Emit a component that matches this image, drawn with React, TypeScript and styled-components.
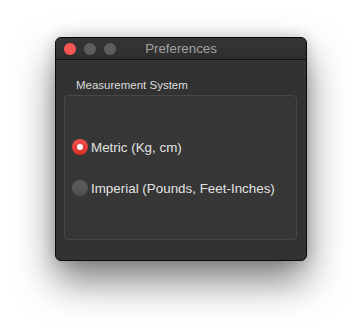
import React from "react";
import styled, { createGlobalStyle } from "styled-components";

const Global = createGlobalStyle`
  html, body { margin: 0; padding: 0; background: #ffffff; }
  body { font-family: "Liberation Sans", "Helvetica Neue", Arial, sans-serif; }
`;

const Page = styled.div`
  width: 362px;
  height: 334px;
  box-sizing: border-box;
  padding: 37px 0 0 55px;
`;

const Window = styled.div`
  width: 252px;
  height: 224px;
  box-sizing: border-box;
  border: 1px solid #0a0a0a;
  border-radius: 6px;
  background: #323232;
  box-shadow: 0 20px 38px rgba(0, 0, 0, 0.5), 0 0 14px rgba(0, 0, 0, 0.18);
  display: flex;
  flex-direction: column;
  overflow: hidden;
`;

const TitleBar = styled.div`
  position: relative;
  height: 21px;
  flex: none;
  display: flex;
  align-items: center;
  gap: 8px;
  padding-left: 8px;
  background: linear-gradient(#353535, #2e2e2e);
  border-bottom: 1px solid #111111;
`;

const Light = styled.span<{ $color: string }>`
  width: 12px;
  height: 12px;
  border-radius: 50%;
  background: ${(p) => p.$color};
  flex: none;
  position: relative;
  z-index: 1;
`;

const Title = styled.div`
  position: absolute;
  inset: 0;
  display: flex;
  align-items: center;
  justify-content: center;
  font-size: 13.3px;
  color: #a0a0a0;
`;

const Body = styled.div`
  flex: 1;
  display: flex;
  flex-direction: column;
  padding: 19px 9px 20px 8px;
`;

const GroupLabel = styled.div`
  font-size: 11.5px;
  line-height: 13px;
  color: #dddddd;
  padding-left: 12px;
  margin-bottom: 3px;
`;

const Group = styled.div`
  flex: 1;
  border: 1px solid #474747;
  border-radius: 4px;
  background: #363636;
  display: flex;
  flex-direction: column;
  justify-content: center;
  gap: 21px;
  padding: 0 0 0 7px;
`;

const Row = styled.label`
  display: flex;
  align-items: center;
  gap: 3px;
  height: 20px;
  font-size: 13.4px;
  color: #e2e2e2;
`;

const Radio = styled.span<{ $checked?: boolean }>`
  width: 16px;
  height: 16px;
  border-radius: 50%;
  flex: none;
  display: flex;
  align-items: center;
  justify-content: center;
  background: ${(p) =>
    p.$checked
      ? "linear-gradient(#f0504a, #d8302a)"
      : "linear-gradient(#5e5e5e, #4e4e4e)"};
  &::after {
    content: "";
    width: 6px;
    height: 6px;
    border-radius: 50%;
    background: #ffffff;
    display: ${(p) => (p.$checked ? "block" : "none")};
  }
`;

export default function App() {
  return (
    <>
      <Global />
      <Page>
        <Window>
          <TitleBar>
            <Light $color="#fc5753" />
            <Light $color="#5d5d5d" />
            <Light $color="#5d5d5d" />
            <Title>Preferences</Title>
          </TitleBar>
          <Body>
            <GroupLabel>Measurement System</GroupLabel>
            <Group>
              <Row>
                <Radio $checked />
                Metric (Kg, cm)
              </Row>
              <Row>
                <Radio />
                Imperial (Pounds, Feet-Inches)
              </Row>
            </Group>
          </Body>
        </Window>
      </Page>
    </>
  );
}
